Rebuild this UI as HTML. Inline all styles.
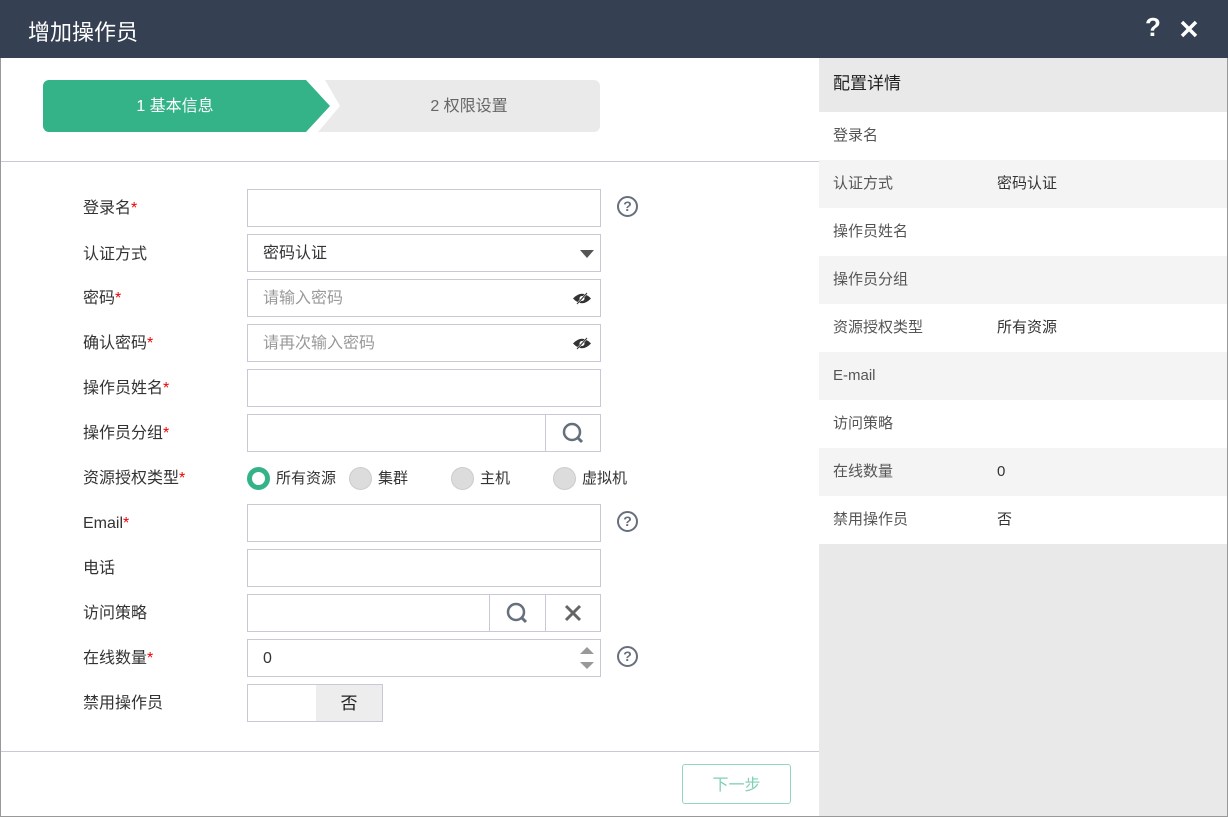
<!DOCTYPE html>
<html><head><meta charset="utf-8"><style>
*{margin:0;padding:0;box-sizing:border-box}
body{width:1228px;height:817px;background:#fff;font-family:"Liberation Sans","Noto Sans CJK SC",sans-serif;position:relative;overflow:hidden;color:#333}
.hd{position:absolute;left:0;top:0;width:1228px;height:58px;background:#354052;color:#fff}
.hd .t{position:absolute;left:28px;top:15px;font-size:22px}
.frame{position:absolute;left:0;top:58px;width:1228px;height:759px;border:1px solid #999;border-top:none}
.lbl{position:absolute;left:83px;font-size:16px;color:#333;line-height:20px;margin-top:2px}
.lbl i{color:#e00;font-style:normal}
.inp{position:absolute;left:247px;width:354px;height:38px;border:1px solid #c9c8d6;background:#fff;font-size:16px;padding-left:15px;line-height:38px}
.ph{color:#999}
.q{position:absolute;left:617px;width:21px;height:21px;border:2px solid #666f7d;border-radius:50%;font-size:14px;font-weight:bold;color:#666f7d;text-align:center;line-height:17px}
.rp{position:absolute;left:819px;top:58px;width:408px;height:758px;background:#e9e9e9}
.rr{position:absolute;left:0;width:408px;height:48px;font-size:15px;color:#555;line-height:48px;padding-left:14px}
.rr b{position:absolute;left:178px;font-weight:normal;color:#333}
.rad{position:absolute;top:467px;width:23px;height:23px;border-radius:50%;background:#dcdcdc;border:1px solid #ccc}
.rt{position:absolute;top:469px;font-size:15px;line-height:20px}
.eye{position:absolute;right:8px;top:12px}
</style></head><body>
<div class="hd"><div class="t">增加操作员</div>
<div style="position:absolute;left:1145px;top:12px;font-size:26px;font-weight:bold">?</div>
<svg style="position:absolute;left:1180px;top:20px" width="18" height="18"><path d="M2 2L16 16M16 2L2 16" stroke="#fff" stroke-width="3.5"/></svg></div>
<div class="frame"></div>
<svg style="position:absolute;left:43px;top:80px" width="558" height="52">
<path d="M282 0H551a6 6 0 0 1 6 6V46a6 6 0 0 1-6 6H275l22-26z" fill="#eaeaea"/>
<path d="M6 0H263l24 26-24 26H6a6 6 0 0 1-6-6V6a6 6 0 0 1 6-6z" fill="#33b387"/>
<text x="132" y="31" fill="#fff" font-size="16" text-anchor="middle" font-family="Liberation Sans,Noto Sans CJK SC,sans-serif">1 基本信息</text>
<text x="426" y="31" fill="#666" font-size="16" text-anchor="middle" font-family="Liberation Sans,Noto Sans CJK SC,sans-serif">2 权限设置</text></svg>
<div style="position:absolute;left:1px;top:161px;width:818px;height:1px;background:#c9c8d6"></div>
<div style="position:absolute;left:1px;top:751px;width:818px;height:1px;background:#c9c8d6"></div>

<div class="lbl" style="top:197px">登录名<i>*</i></div><div class="inp" style="top:189px"></div><div class="q" style="top:196px">?</div>
<div class="lbl" style="top:243px">认证方式</div><div class="inp" style="top:234px">密码认证<svg style="position:absolute;right:6px;top:15px" width="14" height="8"><path d="M0 0H14L7 8z" fill="#555"/></svg></div>
<div class="lbl" style="top:287px">密码<i>*</i></div><div class="inp" style="top:279px"><span class="ph">请输入密码</span><svg class="eye" width="20" height="13"><path d="M1 6.5Q10 -3 19 6.5Q10 16 1 6.5z" fill="#333"/><circle cx="10" cy="6.5" r="2.5" fill="#fff"/><path d="M5 12L15 1" stroke="#fff" stroke-width="2"/><path d="M5 12L15 1" stroke="#333" stroke-width="1"/></svg></div>
<div class="lbl" style="top:332px">确认密码<i>*</i></div><div class="inp" style="top:324px"><span class="ph">请再次输入密码</span><svg class="eye" width="20" height="13"><path d="M1 6.5Q10 -3 19 6.5Q10 16 1 6.5z" fill="#333"/><circle cx="10" cy="6.5" r="2.5" fill="#fff"/><path d="M5 12L15 1" stroke="#fff" stroke-width="2"/><path d="M5 12L15 1" stroke="#333" stroke-width="1"/></svg></div>
<div class="lbl" style="top:377px">操作员姓名<i>*</i></div><div class="inp" style="top:369px"></div>
<div class="lbl" style="top:422px">操作员分组<i>*</i></div><div class="inp" style="top:414px"><div style="position:absolute;left:297px;top:0;width:55px;height:36px;border-left:1px solid #c9c8d6"><svg style="position:absolute;left:16px;top:7px" width="24" height="24"><circle cx="10" cy="10" r="8" fill="none" stroke="#666f7d" stroke-width="2.5"/><path d="M15 15l5 5" stroke="#666f7d" stroke-width="3"/></svg></div></div>
<div class="lbl" style="top:467px">资源授权类型<i>*</i></div>
<div class="rad" style="left:247px;background:#fff;border:5px solid #33b387"></div><div class="rt" style="left:276px">所有资源</div>
<div class="rad" style="left:349px"></div><div class="rt" style="left:378px">集群</div>
<div class="rad" style="left:451px"></div><div class="rt" style="left:480px">主机</div>
<div class="rad" style="left:553px"></div><div class="rt" style="left:582px">虚拟机</div>
<div class="lbl" style="top:512px">Email<i>*</i></div><div class="inp" style="top:504px"></div><div class="q" style="top:511px">?</div>
<div class="lbl" style="top:557px">电话</div><div class="inp" style="top:549px"></div>
<div class="lbl" style="top:602px">访问策略</div><div class="inp" style="top:594px"><div style="position:absolute;left:241px;top:0;width:57px;height:36px;border-left:1px solid #c9c8d6"><svg style="position:absolute;left:16px;top:7px" width="24" height="24"><circle cx="10" cy="10" r="8" fill="none" stroke="#666f7d" stroke-width="2.5"/><path d="M15 15l5 5" stroke="#666f7d" stroke-width="3"/></svg></div><div style="position:absolute;left:297px;top:0;width:55px;height:36px;border-left:1px solid #c9c8d6"><svg style="position:absolute;left:18px;top:9px" width="18" height="18"><path d="M2 2L16 16M16 2L2 16" stroke="#666" stroke-width="3"/></svg></div></div>
<div class="lbl" style="top:647px">在线数量<i>*</i></div><div class="inp" style="top:639px">0<svg style="position:absolute;right:5px;top:5px" width="16" height="26"><path d="M1 9L8 2L15 9z M1 17H15L8 24z" fill="#999"/></svg></div><div class="q" style="top:646px">?</div>
<div class="lbl" style="top:692px">禁用操作员</div>
<div style="position:absolute;left:247px;top:684px;width:136px;height:38px;border:1px solid #c9c8d6"><div style="position:absolute;left:68px;top:0;width:66px;height:36px;background:#ededed;text-align:center;line-height:38px;font-size:17px;color:#222">否</div></div>
<div style="position:absolute;left:682px;top:764px;width:109px;height:40px;border:1px solid #8fd7bd;border-radius:3px;color:#7fd1b3;font-size:16px;text-align:center;line-height:42px">下一步</div>

<div class="rp">
<div style="position:absolute;left:14px;top:15px;font-size:17px;line-height:22px;color:#222">配置详情</div>
<div class="rr" style="top:54px;background:#fff">登录名</div>
<div class="rr" style="top:102px;background:#f4f4f4">认证方式<b>密码认证</b></div>
<div class="rr" style="top:150px;background:#fff">操作员姓名</div>
<div class="rr" style="top:198px;background:#f4f4f4">操作员分组</div>
<div class="rr" style="top:246px;background:#fff">资源授权类型<b>所有资源</b></div>
<div class="rr" style="top:294px;background:#f4f4f4">E-mail</div>
<div class="rr" style="top:342px;background:#fff">访问策略</div>
<div class="rr" style="top:390px;background:#f4f4f4">在线数量<b>0</b></div>
<div class="rr" style="top:438px;background:#fff">禁用操作员<b>否</b></div>
</div>
</body></html>
